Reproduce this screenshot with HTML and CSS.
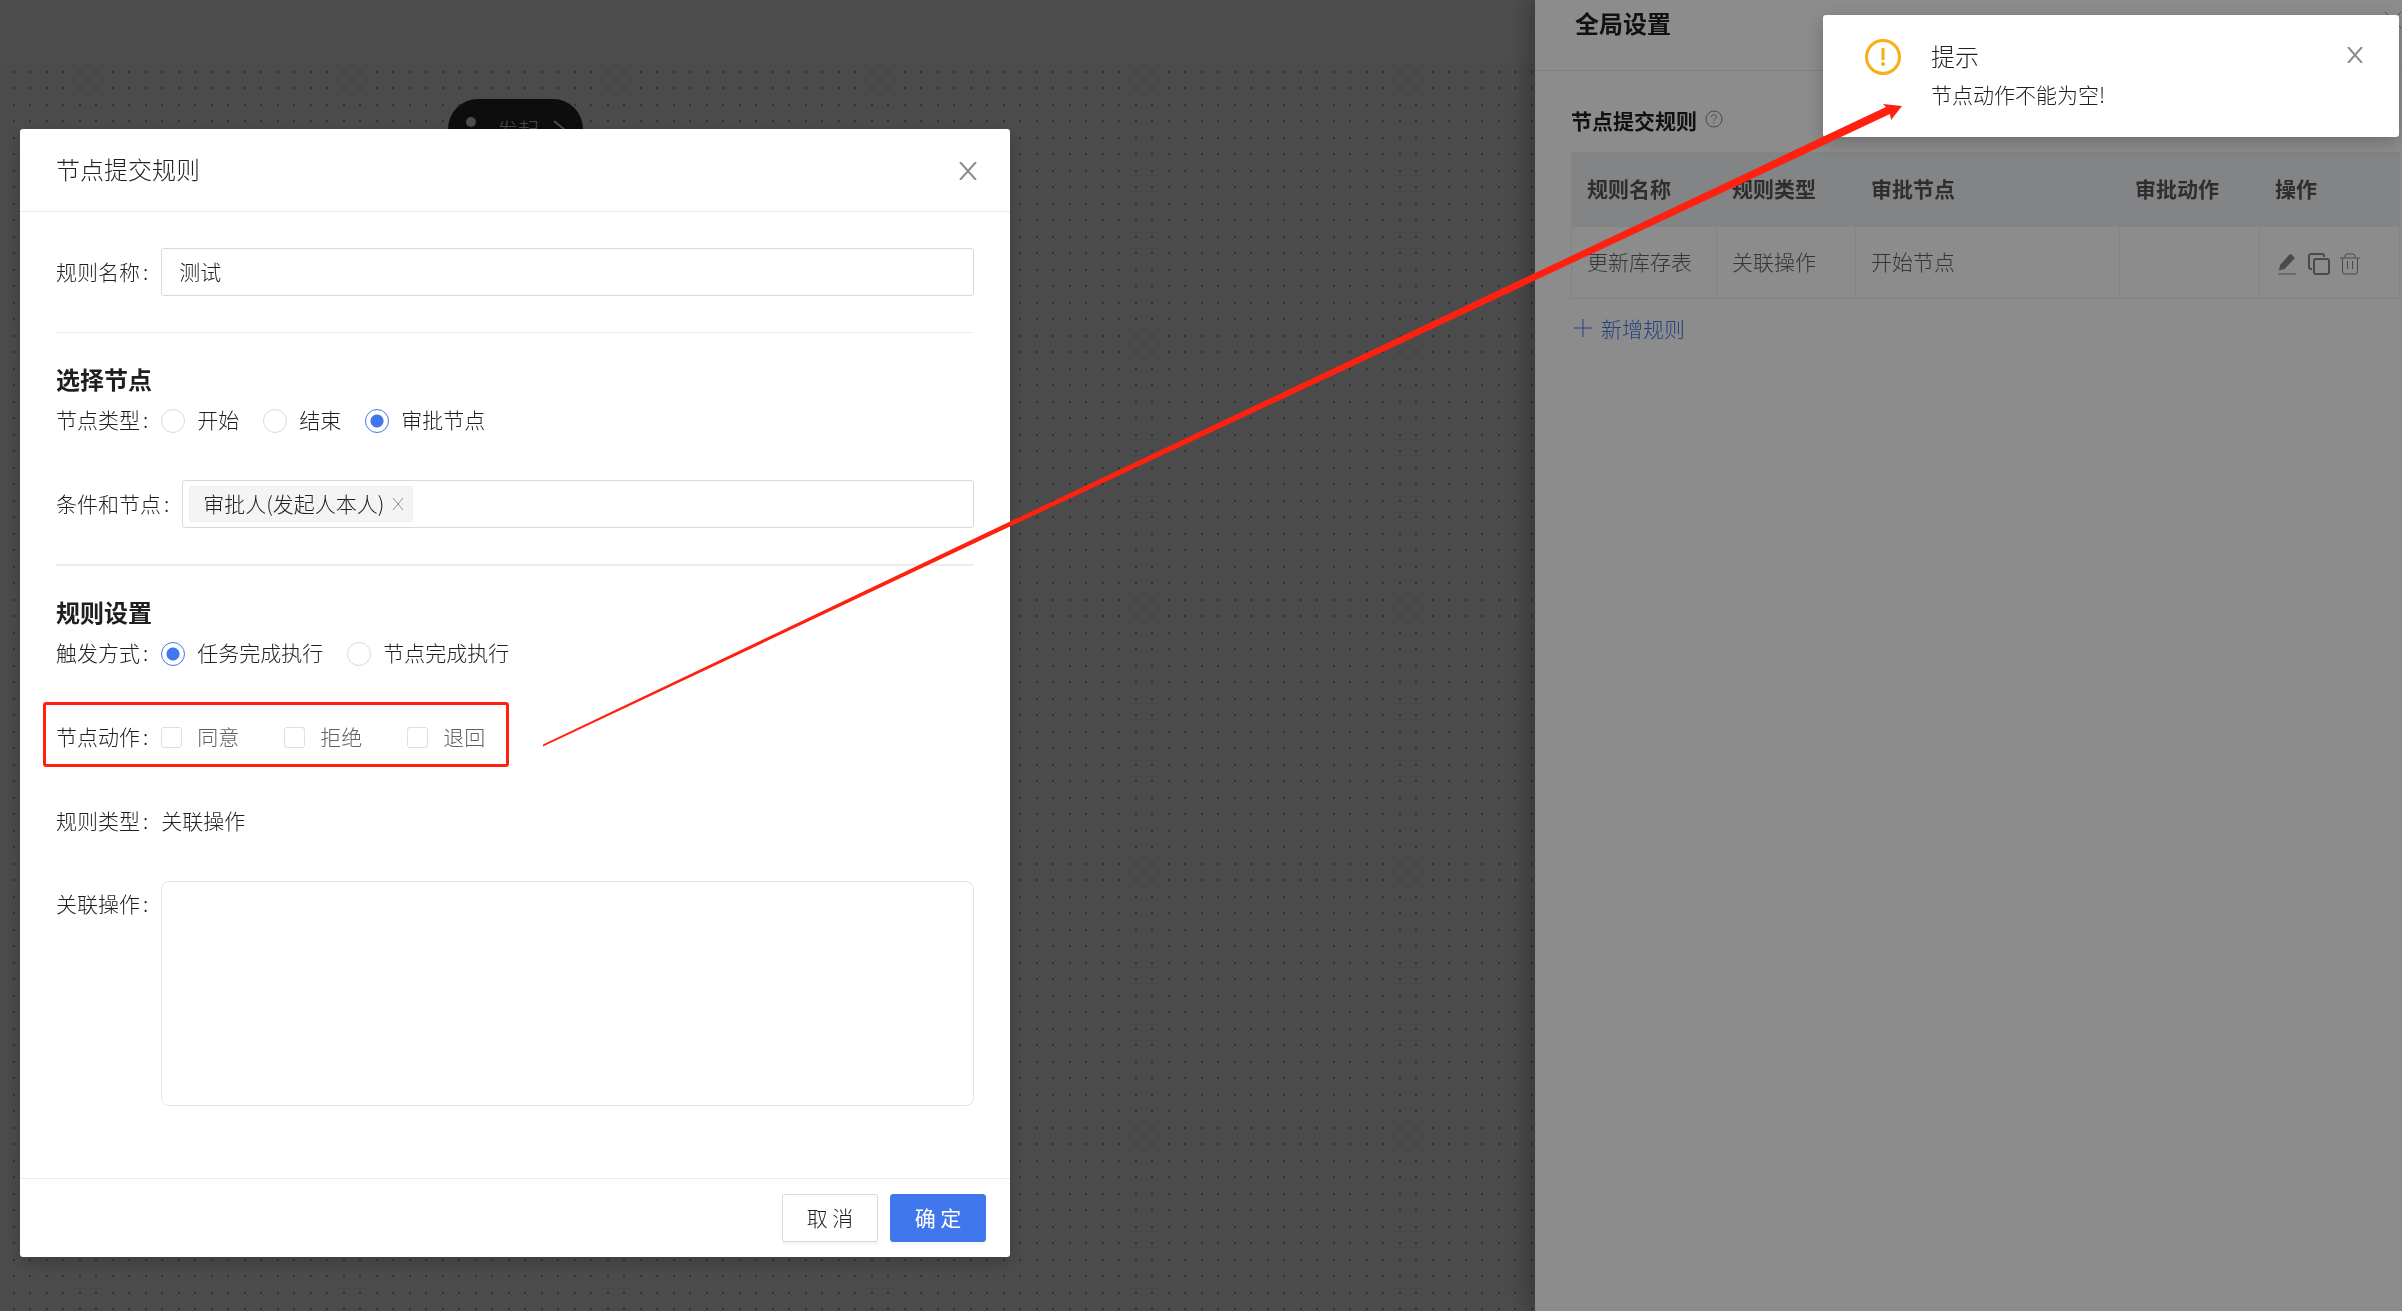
FILE: index.html
```html
<!DOCTYPE html>
<html lang="zh-CN">
<head>
<meta charset="utf-8">
<meta name="viewport" content="width=device-width, initial-scale=1">
<title>节点提交规则</title>
<link rel="stylesheet" href="styles.css">
</head>
<body>
<div class="page">
  <header class="topbar"></header>
  <main class="canvas">
    <div class="flow-node">
      <svg class="icon-user" viewBox="0 0 24 24" aria-hidden="true"><circle cx="12" cy="5" r="5"/><path d="M3 22v-4c0-4 3-6 9-6s9 2 9 6v4z"/></svg>
      <span>发起</span>
      <svg class="icon-chevron" viewBox="0 0 20 20" aria-hidden="true"><path d="M1 2l11 9-11 9"/></svg>
    </div>
  </main>
</div>

<div class="mask"></div>

<aside class="drawer">
  <div class="drawer-header">
    <h2 class="drawer-title">全局设置</h2>
    <button class="icon-button drawer-close" type="button" aria-label="关闭"><svg viewBox="0 0 18 18"><path d="M1 1l16 16M17 1L1 17"/></svg></button>
  </div>
  <div class="drawer-body">
    <h3 class="drawer-section">节点提交规则
      <svg class="icon-help" viewBox="0 0 18 18" aria-hidden="true"><circle cx="9" cy="9" r="8"/><path d="M6.600 7c0-3.200 4.800-3.200 4.800 0 0 1.600-2.400 1.700-2.400 3.700M9 12.300v1.300"/></svg>
    </h3>
    <table class="rules">
      <colgroup><col class="col-name"><col class="col-type"><col><col class="col-action"><col class="col-action"></colgroup>
      <thead><tr><th>规则名称</th><th>规则类型</th><th>审批节点</th><th>审批动作</th><th>操作</th></tr></thead>
      <tbody><tr>
        <td>更新库存表</td><td>关联操作</td><td>开始节点</td><td></td>
        <td><div class="row-actions">
          <button class="icon-button" type="button" aria-label="编辑"><svg viewBox="0 0 24 24"><path class="fill" d="M3 18.500L4 13 13.500 2.500Q14.500 1.500 15.500 2.500L18 5Q19 6 18 7L8.500 17Z"/><path class="thin" d="M2 22h18"/></svg></button>
          <button class="icon-button" type="button" aria-label="复制"><svg viewBox="0 0 24 24"><rect x="7" y="7" width="15" height="15" rx="2"/><path d="M17 5V4q0-2-2-2H4Q2 2 2 4v11q0 2 2 2h1"/></svg></button>
          <button class="icon-button" type="button" aria-label="删除"><svg viewBox="0 0 24 24"><path class="thin" d="M2 6h20M7 5.500V4q0-2 2-2h6q2 0 2 2v1.500M4.500 6.500V20q0 2 2 2h11q2 0 2-2V6.500M9.500 9v8M14.500 9v8"/></svg></button>
        </div></td>
      </tr></tbody>
    </table>
    <a class="add-rule" href="#"><svg viewBox="0 0 18 18" aria-hidden="true"><path d="M9 0v18M0 9h18"/></svg>新增规则</a>
  </div>
</aside>

<div class="mask"></div>

<section class="modal" role="dialog" aria-labelledby="modal-title">
  <header class="modal-header">
    <h1 class="modal-title" id="modal-title">节点提交规则</h1>
    <button class="icon-button modal-close" type="button" aria-label="关闭"><svg viewBox="0 0 18 18"><path d="M1 0l16 18M17 0L1 18"/></svg></button>
  </header>
  <form class="modal-body">
    <div class="field">
      <label class="label" for="rule-name">规则名称<span class="colon">:</span></label>
      <input class="text-input" id="rule-name" type="text" value="测试">
    </div>
    <hr>
    <h2 class="group-title">选择节点</h2>
    <div class="field choices" role="radiogroup" aria-labelledby="node-type">
      <span class="label" id="node-type">节点类型<span class="colon">:</span></span>
      <label class="choice"><input type="radio" name="node-type"><span class="text">开始</span></label>
      <label class="choice"><input type="radio" name="node-type"><span class="text">结束</span></label>
      <label class="choice"><input type="radio" name="node-type" checked><span class="text">审批节点</span></label>
    </div>
    <div class="field">
      <label class="label" for="nodes">条件和节点<span class="colon">:</span></label>
      <div class="tag-select">
        <span class="tag"><span class="text">审批人(发起人本人)</span><button class="icon-button" type="button" aria-label="移除"><svg viewBox="0 0 12 12"><path d="M1 0l10 12M11 0L1 12"/></svg></button></span>
        <input id="nodes" type="text">
      </div>
    </div>
    <hr class="strong">
    <h2 class="group-title">规则设置</h2>
    <div class="field choices" role="radiogroup" aria-labelledby="trigger">
      <span class="label" id="trigger">触发方式<span class="colon">:</span></span>
      <label class="choice"><input type="radio" name="trigger" checked><span class="text">任务完成执行</span></label>
      <label class="choice"><input type="radio" name="trigger"><span class="text">节点完成执行</span></label>
    </div>
    <div class="field checks" role="group" aria-labelledby="node-action">
      <span class="label" id="node-action">节点动作<span class="colon">:</span></span>
      <label class="check"><input type="checkbox"><span class="text">同意</span></label>
      <label class="check"><input type="checkbox"><span class="text">拒绝</span></label>
      <label class="check"><input type="checkbox"><span class="text">退回</span></label>
    </div>
    <div class="field"><span class="label">规则类型<span class="colon">:</span></span><span class="text">关联操作</span></div>
    <div class="field field-top">
      <label class="label" for="related">关联操作<span class="colon">:</span></label>
      <textarea class="related" id="related"></textarea>
    </div>
  </form>
  <footer class="modal-footer">
    <button class="button" type="button">取 消</button>
    <button class="button primary" type="button">确 定</button>
  </footer>
</section>

<div class="notice" role="alert">
  <svg class="icon-warning" viewBox="0 0 36 36" aria-hidden="true"><circle cx="18" cy="18" r="16.500"/><path d="M18 9v12"/><circle class="dot" cx="18" cy="25" r="2"/></svg>
  <div class="notice-text">
    <strong class="notice-title">提示</strong>
    <p>节点动作不能为空!</p>
  </div>
  <button class="icon-button notice-close" type="button" aria-label="关闭"><svg viewBox="0 0 16 16"><path d="M1 0l14 16M15 0L1 16"/></svg></button>
</div>

<svg class="arrow" viewBox="0 0 1360 644" aria-hidden="true"><path d="M0 641.500L467 418.500 1343 4 1340 1 1359 3 1348 17 1347 11 467 423.500 0 643.500Z"/></svg>
</body>
</html>
```
FILE: styles.css
```css
*, ::before, ::after { box-sizing: border-box; }

body {
  margin: 0;
  color: #1f1f1f;
  font: 300 21px/32px "Noto Sans CJK SC", sans-serif;
}

h1, h2, h3, p { margin: 0; }

button, input, textarea {
  color: inherit;
  font: inherit;
}

svg {
  display: block;
  flex: none;
  fill: none;
  stroke: currentColor;
}

.page {
  display: flex;
  flex-direction: column;
  height: 100vh;
}

.topbar {
  height: 63px;
  background: #fff;
}

.canvas {
  flex: 1;
  padding: 36px 448px;
  background-color: #f8f8f8;
  background-image:
    radial-gradient(circle at 14px 9px, #aaa 1px, transparent 1px),
    radial-gradient(circle at 30px 9px, #aaa 1px, transparent 1px),
    radial-gradient(circle at 14px 25px, #aaa 1px, transparent 1px),
    radial-gradient(circle at 30px 25px, #aaa 1px, transparent 1px);
  background-size: 33px 33px;
}

.flow-node {
  display: flex;
  align-items: center;
  gap: 14px;
  width: 135px;
  height: 60px;
  padding: 0 11px;
  border-radius: 30px;
  background: #2b2b2b;
  color: #f8f8f8;
  white-space: nowrap;
}

.icon-user {
  width: 24px;
  height: 24px;
  fill: currentColor;
  stroke: none;
}

.icon-chevron {
  width: 20px;
  height: 20px;
  stroke-width: 2;
}

.mask {
  position: fixed;
  inset: 0;
  background: rgba(0, 0, 0, .45);
}

.icon-button {
  display: block;
  flex: none;
  padding: 0;
  border: 0;
  background: none;
  color: #8c8c8c;
}

/* Settings drawer */
.drawer {
  position: fixed;
  inset: 0 0 0 auto;
  width: 867px;
  background: #fff;
  box-shadow: -6px 0 24px rgba(0, 0, 0, .3);
}

.drawer-header {
  display: flex;
  justify-content: space-between;
  height: 71px;
  padding: 5px 0 0 40px;
  border-bottom: 1px solid #e8e8e8;
}

.drawer-title {
  font-size: 24px;
  font-weight: 700;
  line-height: 36px;
}

.drawer-close {
  width: 18px;
  height: 30px;
}

.drawer-body { padding: 33px 2px 0 36px; }

.drawer-section {
  display: flex;
  gap: 8px;
  font-size: 21px;
  font-weight: 700;
  line-height: 32px;
}

.icon-help {
  width: 18px;
  height: 18px;
  margin-top: 6px;
  color: #888;
}

.rules {
  width: 100%;
  margin-top: 16px;
  border-collapse: collapse;
  table-layout: fixed;
  color: #606266;
}

.col-name { width: 145px; }
.col-type { width: 139px; }
.col-action { width: 140px; }

.rules th, .rules td {
  height: 72px;
  padding: 0 15px 3px;
  border: 1px solid #ebeef5;
  text-align: left;
}

.rules th {
  height: 74px;
  background: #eff1f4;
  color: #555;
  font-weight: 700;
}

.row-actions {
  display: flex;
  gap: 7px;
  padding: 6px 0 0 1px;
}

.row-actions svg {
  width: 24px;
  height: 24px;
  stroke-width: 2;
}

.row-actions .icon-button { color: #888; }

.row-actions .thin { stroke-width: 1; }

.row-actions .fill {
  fill: currentColor;
  stroke: none;
}

.add-rule {
  display: inline-flex;
  align-items: center;
  gap: 9px;
  margin: 13px 0 0 3px;
  color: #4077ed;
  text-decoration: none;
}

.add-rule svg {
  width: 18px;
  height: 18px;
}

/* Rule dialog */
.modal {
  position: fixed;
  top: 129px;
  left: 20px;
  width: 990px;
  border-radius: 3px;
  background: #fff;
  box-shadow: 0 6px 18px rgba(0, 0, 0, .2);
}

.modal-header {
  display: flex;
  align-items: center;
  justify-content: space-between;
  padding: 22px 33px 21px 36px;
  border-bottom: 1px solid #ebebeb;
}

.modal-title {
  padding-bottom: 3px;
  font-size: 24px;
  font-weight: 300;
  line-height: 36px;
}

.modal-close svg {
  width: 18px;
  height: 18px;
  stroke-width: 2;
}

.modal-body { padding: 36px 36px 72px; }

.field {
  display: flex;
  align-items: center;
  min-height: 48px;
}

.field + .field { margin-top: 36px; }

.label {
  flex: none;
  padding: 0 13px 3px 0;
}

.colon { margin-left: 3px; }

.text { padding-bottom: 3px; }

.text-input {
  flex: 1;
  height: 48px;
  padding: 0 17px 3px;
  border: 1px solid #d9d9d9;
  border-radius: 3px;
}

hr {
  height: 1px;
  margin: 36px 0 28px;
  border: 0;
  background: #ededed;
}

hr.strong { height: 2px; }

.group-title {
  font-size: 24px;
  font-weight: 700;
  line-height: 36px;
}

.choices { gap: 24px; min-height: 47px; }
.choices .label { margin-right: -24px; }

.choice, .check {
  display: flex;
  align-items: center;
}

.choice { gap: 12px; }

.choice input {
  width: 24px;
  height: 24px;
  margin: 0;
  border: 1px solid #d9d9d9;
  border-radius: 50%;
  appearance: none;
}

.choice input:checked {
  border-color: #4077ed;
  background: radial-gradient(circle, #4077ed 6px, transparent 7px);
}

.tag-select {
  display: flex;
  flex: 1;
  align-items: center;
  height: 48px;
  padding: 0 6px;
  border: 1px solid #d9d9d9;
  border-radius: 3px;
}

.tag {
  display: flex;
  align-items: center;
  gap: 8px;
  height: 36px;
  padding: 0 8px 0 13px;
  border: 1px solid #f0f0f0;
  border-radius: 3px;
  background: #f4f4f4;
}

.tag svg {
  width: 12px;
  height: 14px;
}

.tag-select input {
  flex: 1;
  min-width: 0;
  border: 0;
  background: none;
}

.checks {
  position: relative;
  color: #606266;
}

.checks::after {
  content: "";
  position: absolute;
  inset: -11px auto -6px -13px;
  width: 466px;
  border: 3px solid #ff2010;
  border-radius: 3px;
  pointer-events: none;
}

.checks .label { color: #1f1f1f; }

.check {
  gap: 15px;
  width: 123px;
}

.check input {
  width: 21px;
  height: 21px;
  margin: 0;
  border: 1px solid #dcdfe6;
  border-radius: 3px;
  appearance: none;
}

.field-top { align-items: flex-start; }
.field-top .label { padding-top: 6px; }

.related {
  flex: 1;
  height: 225px;
  border: 1px solid #e4e4e4;
  border-radius: 8px;
  resize: none;
}

.modal-footer {
  display: flex;
  justify-content: flex-end;
  gap: 12px;
  padding: 15px 24px;
  border-top: 1px solid #ebebeb;
}

.button {
  width: 96px;
  height: 48px;
  padding: 0 0 2px;
  border: 1px solid #d9d9d9;
  border-radius: 3px;
  background: #fff;
  box-shadow: 0 3px 0 rgba(0, 0, 0, .03);
}

.button.primary {
  border-color: #4077ed;
  background: #4077ed;
  color: #fff;
  font-weight: 400;
}

/* Notification */
.notice {
  position: fixed;
  top: 15px;
  right: 3px;
  display: flex;
  width: 576px;
  padding: 24px 36px 24px 42px;
  border-radius: 3px;
  background: #fff;
  box-shadow: 0 6px 18px rgba(0, 0, 0, .2);
}

.icon-warning {
  width: 36px;
  height: 36px;
  color: #faad14;
  stroke-width: 3;
}

.icon-warning .dot {
  fill: currentColor;
  stroke: none;
}

.notice-text {
  flex: 1;
  padding-left: 30px;
}

.notice-title {
  display: block;
  font-size: 24px;
  font-weight: 300;
  line-height: 34px;
}

.notice-text p { padding: 5px 0 3px; }

.notice-close {
  align-self: flex-start;
  padding-top: 8px;
}

.notice-close svg {
  width: 16px;
  height: 16px;
  stroke-width: 2;
}

/* Pointer from the field to the notification */
.arrow {
  position: fixed;
  top: 103px;
  left: 543px;
  width: 1360px;
  height: 644px;
  pointer-events: none;
}

.arrow path {
  fill: #ff2010;
  stroke: none;
}
```
